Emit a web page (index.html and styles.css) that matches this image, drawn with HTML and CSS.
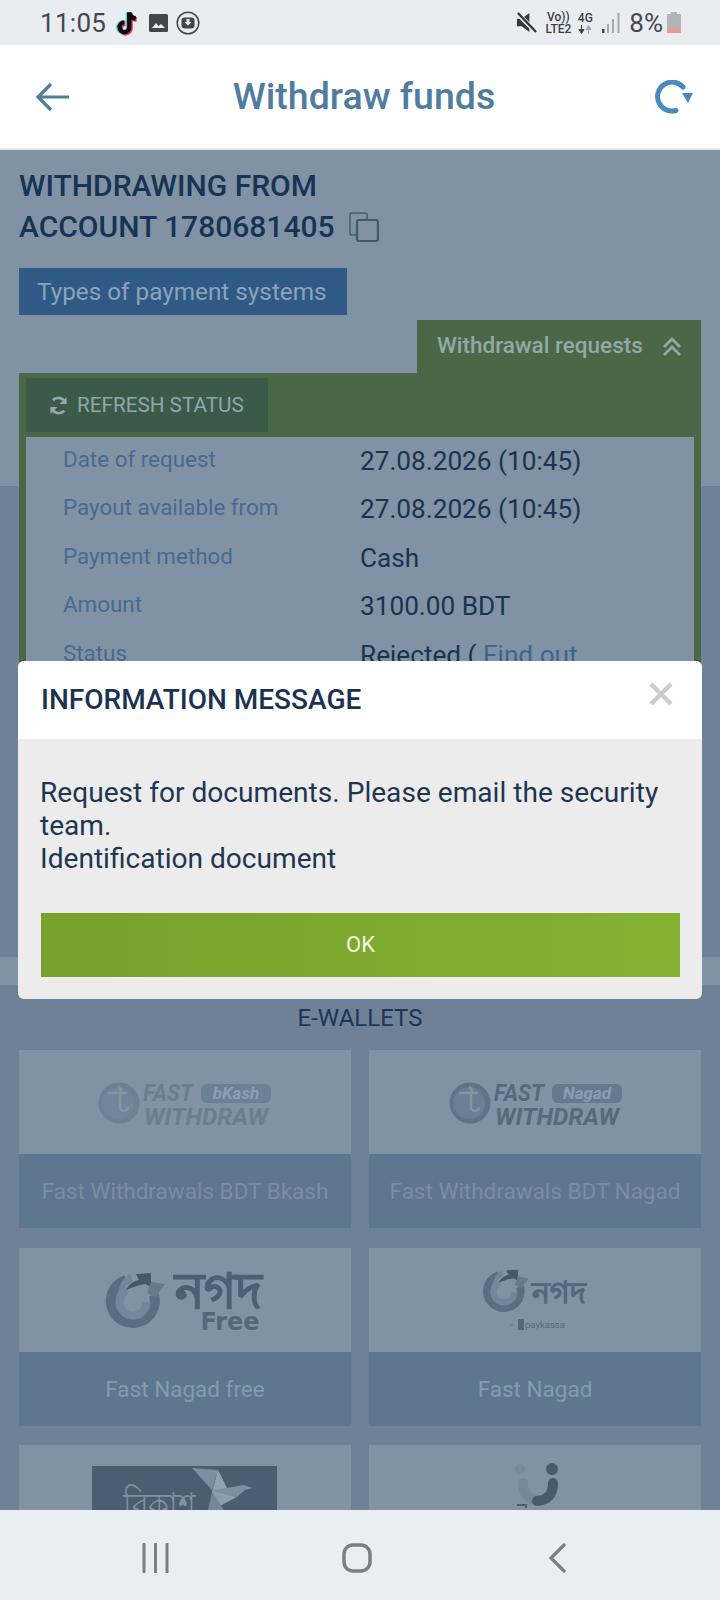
FILE: index.html
```html
<!DOCTYPE html>
<html lang="en">
<head>
<meta charset="utf-8">
<title>Withdraw funds</title>
<link rel="stylesheet" href="styles.css">
</head>
<body>
<div class="app">
  <div class="status">
    <div class="status-left">
      <span class="clock">11:05</span>
      <svg class="ic-tiktok" viewBox="0 0 24 26"><path d="M15 3v14a4.500 4.500 0 1 1-4.500-4.500" fill="none" stroke="#f0385f" stroke-width="4.500" transform="translate(1 1)"/><path d="M15 3c.5 3.500 3 5.500 6 5.700" fill="none" stroke="#f0385f" stroke-width="4.500" transform="translate(1 1)"/><path d="M15 3v14a4.500 4.500 0 1 1-4.500-4.500" fill="none" stroke="#4be0e6" stroke-width="4.500" transform="translate(-1 0)"/><path d="M15 3v14a4.500 4.500 0 1 1-4.500-4.500M15 3c.5 3.500 3 5.500 6 5.700" fill="none" stroke="#0c0c10" stroke-width="4.200"/></svg>
      <svg class="ic-image" viewBox="0 0 19 18"><rect width="19" height="18" rx="1.500" fill="#43474d"/><path d="M3 14l4-5 2.500 3 2.500-2 4 4z" fill="#e9edf2"/></svg>
      <svg class="ic-circle" viewBox="0 0 24 24"><circle cx="12" cy="12" r="10.800" fill="none" stroke="#44484e" stroke-width="1.500"/><rect x="5.500" y="6.500" width="13" height="11" rx="3" fill="#43474d"/><path d="M10.500 8h3v3h2l-3.500 3.500L8.500 11h2z" fill="#e9edf2"/></svg>
    </div>
    <div class="status-right">
      <svg class="ic-mute" viewBox="0 0 22 22"><path d="M1 7h5l8-6v20l-8-6H1z" fill="#33373c"/><path d="M1 1l20 20" stroke="#e9edf2" stroke-width="5"/><path d="M2 1l19 20" stroke="#33373c" stroke-width="2.500"/></svg>
      <span class="volte"><span>Vo))</span><span>LTE2</span></span>
      <span class="net"><span>4G</span><svg class="ic-updown" viewBox="0 0 14 9"><path d="M3.500 0v5M1 4.500l2.500 4 2.500-4z" fill="#3d4147" stroke="#3d4147"/><path d="M10.500 9V4M8 4.500l2.500-4 2.500 4z" fill="#a5a9ae" stroke="#a5a9ae"/></svg></span>
      <svg class="ic-signal" viewBox="0 0 18 20"><rect x="0" y="16" width="2.500" height="4" fill="#43474d"/><rect x="5" y="11" width="2" height="9" fill="#a4a8ad"/><rect x="10" y="6" width="2" height="14" fill="#a4a8ad"/><rect x="15.500" y="0" width="2" height="20" fill="#a4a8ad"/></svg>
      <span class="battery-text">8%</span>
      <svg class="ic-battery" viewBox="0 0 14 21"><rect x="4" y="0" width="6" height="2" fill="#b0b4ba"/><rect y="2" width="14" height="19" rx="1" fill="#b0b4ba"/><rect y="17" width="14" height="4" fill="#ee9a86"/></svg>
    </div>
  </div>

  <header class="topbar">
    <svg class="ic-back" viewBox="0 0 36 30"><path d="M34 15H3M16 2L3 15l13 13" fill="none" stroke="#4f7da0" stroke-width="3.200"/></svg>
    <h1 class="topbar-title">Withdraw funds</h1>
    <svg class="ic-reload" viewBox="0 0 38 34"><path d="M21 30.500A14.500 14.500 0 1 1 28 7" fill="none" stroke="#4a88bf" stroke-width="5" stroke-linecap="round"/><path d="M38 13l-5 10-6-10z" fill="#4a88bf"/></svg>
  </header>

  <main class="content">
    <h2 class="account-title">WITHDRAWING FROM<br>ACCOUNT 1780681405 <svg class="ic-copy" viewBox="0 0 30 30"><path d="M7 23H3a2 2 0 0 1-2-2V3a2 2 0 0 1 2-2h13a2 2 0 0 1 2 2v4" fill="none" stroke="#4f6a7c" stroke-width="2"/><rect x="8" y="8" width="21" height="21" rx="2" fill="none" stroke="#3e5a6b" stroke-width="2.200"/></svg></h2>

    <button class="types-btn">Types of payment systems</button>

    <div class="tab-row">
      <div class="tab">
        <span>Withdrawal requests</span>
        <svg class="ic-chevrons" viewBox="0 0 20 20"><path d="M2 10l8-8 8 8M2 18l8-8 8 8" fill="none" stroke="#93a8a8" stroke-width="2.800"/></svg>
      </div>
    </div>

    <section class="requests">
      <button class="refresh-btn">
        <svg class="ic-sync" viewBox="0 0 20 20"><path d="M17.500 8A8 8 0 0 0 4 4.500M2.500 12A8 8 0 0 0 16 15.500" fill="none" stroke="#93a6a9" stroke-width="3"/><path d="M18.500 1v7.500H11zM1.500 19v-7.500H9z" fill="#93a6a9"/></svg>
        REFRESH STATUS
      </button>
      <dl class="details">
        <div class="row"><dt>Date of request</dt><dd>27.08.2026 (10:45)</dd></div>
        <div class="row"><dt>Payout available from</dt><dd>27.08.2026 (10:45)</dd></div>
        <div class="row"><dt>Payment method</dt><dd>Cash</dd></div>
        <div class="row"><dt>Amount</dt><dd>3100.00 BDT</dd></div>
        <div class="row"><dt>Status</dt><dd>Rejected ( <a class="link">Find out</a></dd></div>
      </dl>
    </section>

    <h3 class="group-title">E-WALLETS</h3>

    <div class="cards">
      <article class="card">
        <div class="card-logo">
          <svg class="logo" viewBox="0 0 332 104">
            <circle cx="100" cy="53" r="20.500" fill="#6d8094"/><circle cx="99" cy="53" r="16" fill="#72859a"/>
            <path d="M89 43h19M99 37c5 2 2 5 2 10v9c0 7 8 6 8 1" fill="none" stroke="#84969f" stroke-width="2.500"/>
            <text class="fw-fast" x="124" y="51" textLength="50" lengthAdjust="spacingAndGlyphs">FAST</text>
            <rect x="182" y="34" width="70" height="19" rx="6" fill="#6c8095"/>
            <text class="fw-tag" x="217" y="49" text-anchor="middle">bKash</text>
            <text class="fw-draw" x="125" y="75" textLength="124" lengthAdjust="spacingAndGlyphs">WITHDRAW</text>
          </svg>
        </div>
        <div class="card-name">Fast Withdrawals BDT Bkash</div>
      </article>
      <article class="card">
        <div class="card-logo">
          <svg class="logo" viewBox="0 0 332 104">
            <circle cx="101" cy="53" r="20.500" fill="#5f7287"/><circle cx="100" cy="53" r="16" fill="#6b7e93"/>
            <path d="M90 43h19M100 37c5 2 2 5 2 10v9c0 7 8 6 8 1" fill="none" stroke="#84969f" stroke-width="2.500"/>
            <text class="fw-fast fw-dark" x="125" y="51" textLength="50" lengthAdjust="spacingAndGlyphs">FAST</text>
            <rect x="183" y="34" width="70" height="19" rx="6" fill="#66798e"/>
            <text class="fw-tag" x="218" y="49" text-anchor="middle">Nagad</text>
            <text class="fw-draw fw-dark" x="126" y="75" textLength="124" lengthAdjust="spacingAndGlyphs">WITHDRAW</text>
          </svg>
        </div>
        <div class="card-name">Fast Withdrawals BDT Nagad</div>
      </article>
      <article class="card">
        <div class="card-logo">
          <svg class="logo" viewBox="0 0 332 104">
            <g transform="translate(114 54)">
              <path d="M-7-22A22 22 0 1 0 21-7" fill="none" stroke="#5a6d82" stroke-width="10"/>
              <path d="M-6-12A13.500 13.500 0 1 0 13.500 0" fill="none" stroke="#74879a" stroke-width="8"/>
              <path d="M-15-8C-14-18-9-25-3-28L0-20C-6-18-10-13-15-8Z" fill="#74879a"/>
              <path d="M-7-12C-4-18 1-21 6-22L3-28 18-29V-15L12-18C6-17 0-15-7-12Z" fill="#46576b"/>
              <path d="M18-20L32-18 23-5 14-9Z" fill="#66798d"/>
            </g>
            <text class="nagad-big" x="199" y="60" text-anchor="middle">নগদ</text>
            <text class="nagad-free" x="211" y="82" text-anchor="middle">Free</text>
          </svg>
        </div>
        <div class="card-name card-name-lite">Fast Nagad free</div>
      </article>
      <article class="card">
        <div class="card-logo">
          <svg class="logo" viewBox="0 0 332 104">
            <g transform="translate(135 44) scale(.77)">
              <path d="M-7-22A22 22 0 1 0 21-7" fill="none" stroke="#5a6d82" stroke-width="10"/>
              <path d="M-6-12A13.500 13.500 0 1 0 13.500 0" fill="none" stroke="#74879a" stroke-width="8"/>
              <path d="M-15-8C-14-18-9-25-3-28L0-20C-6-18-10-13-15-8Z" fill="#74879a"/>
              <path d="M-7-12C-4-18 1-21 6-22L3-28 18-29V-15L12-18C6-17 0-15-7-12Z" fill="#46576b"/>
              <path d="M18-20L32-18 23-5 14-9Z" fill="#66798d"/>
            </g>
            <text class="nagad-small" x="190" y="55" text-anchor="middle">নগদ</text>
            <path d="M141 77h3" stroke="#65788c" stroke-width="1"/>
            <rect x="149" y="71" width="6" height="11" fill="#53667a"/>
            <text class="paykassa" x="156" y="80">paykassa</text>
          </svg>
        </div>
        <div class="card-name card-name-lite">Fast Nagad</div>
      </article>
      <article class="card">
        <div class="card-logo">
          <svg class="logo" viewBox="0 0 332 104">
            <rect x="73" y="21" width="185" height="83" fill="#4b5d70"/>
            <text class="bkash-bn" x="104" y="74" textLength="72" lengthAdjust="spacingAndGlyphs">বিকাশ</text>
            <path d="M173 23l26 2-6 20z" fill="#7d8fa2"/>
            <path d="M199 25l9 18-15 4z" fill="#91a2b3"/>
            <path d="M193 45l25 7-25 13z" fill="#8b9cae"/>
            <path d="M208 43l16-3 10 3-8 2-8 7-25-7z" fill="#7d8fa2"/>
            <path d="M189 65l4-18 12 18z" fill="#74869a"/>
          </svg>
        </div>
      </article>
      <article class="card">
        <div class="card-logo">
          <svg class="logo" viewBox="0 0 332 104">
            <circle cx="151" cy="24" r="5" fill="#788a9d"/><circle cx="183" cy="24" r="6" fill="#495a6d"/>
            <path d="M154 38c0 11 6 17 16 17" fill="none" stroke="#75879b" stroke-width="10" stroke-linecap="round"/>
            <path d="M184 38c0 11-5 17-16 18" fill="none" stroke="#485a6e" stroke-width="10" stroke-linecap="round"/>
            <path d="M148 60h9v3" fill="none" stroke="#4c5d70" stroke-width="2"/>
          </svg>
        </div>
      </article>
    </div>
  </main>

  <nav class="navbar">
    <svg class="ic-recents" viewBox="0 0 27 30"><path d="M2 1v28M13.500 1v28M25 1v28" fill="none" stroke="#7b7f85" stroke-width="3" stroke-linecap="round"/></svg>
    <svg class="ic-home" viewBox="0 0 30 30"><rect x="2" y="2" width="26" height="26" rx="9" fill="none" stroke="#7b7f85" stroke-width="3.500"/></svg>
    <svg class="ic-navback" viewBox="0 0 18 30"><path d="M16 2L3 15l13 13" fill="none" stroke="#7b7f85" stroke-width="3.200" stroke-linecap="round"/></svg>
  </nav>

  <div class="modal">
    <div class="modal-head">
      <h2 class="modal-title">INFORMATION MESSAGE</h2>
      <svg class="ic-close" viewBox="0 0 24 24"><path d="M2 2l20 20M22 2L2 22" stroke="#cccccc" stroke-width="4.500"/></svg>
    </div>
    <div class="modal-body">
      <p class="modal-text">Request for documents. Please email the security team.<br>Identification document</p>
      <button class="ok-btn">OK</button>
    </div>
  </div>
</div>
</body>
</html>
```

FILE: styles.css
```css
* { box-sizing: border-box; }
html, body { margin: 0; padding: 0; }
body { font-family: Roboto, "Noto Sans", sans-serif; }

.app {
  position: relative;
  width: 720px;
  height: 1600px;
  display: flex;
  flex-direction: column;
  overflow: hidden;
}

/* status bar */
.status {
  height: 45px;
  flex: none;
  background: #e9edf2;
  display: flex;
  justify-content: space-between;
  align-items: center;
  padding: 0 39px 0 40px;
  color: #43474d;
}
.status-left, .status-right { display: flex; align-items: center; }
.clock { font-size: 26px; letter-spacing: .3px; font-weight: 400; }
.ic-tiktok { width: 26px; height: 28px; margin-left: 7px; }
.ic-image { width: 19px; height: 18px; margin-left: 10px; }
.ic-circle { width: 24px; height: 24px; margin-left: 8px; }
.ic-mute { width: 21px; height: 21px; }
.volte {
  display: flex; flex-direction: column; align-items: center;
  font-size: 12px; line-height: 12px; font-weight: 500; margin-left: 7px; width: 28px; color: #3d4147;
}
.net {
  display: flex; flex-direction: column; align-items: center;
  font-size: 12px; line-height: 12px; font-weight: 500; margin-left: 6px; width: 14px; color: #3d4147;
}
.ic-updown { width: 14px; height: 9px; margin-top: 1px; }
.ic-signal { width: 18px; height: 20px; margin-left: 10px; }
.battery-text { font-size: 26px; margin-left: 9px; }
.ic-battery { width: 14px; height: 21px; margin-left: 4px; }

/* header */
.topbar {
  height: 105px;
  flex: none;
  background: #fff;
  border-bottom: 2px solid #e3e6ea;
  display: flex;
  align-items: center;
  justify-content: space-between;
  padding: 1px 27px 0 35px;
}
.ic-back { width: 36px; height: 30px; }
.topbar-title { margin: 0 0 0 2px; font-size: 37.500px; font-weight: 500; color: #4f7c9f; line-height: 1; }
.ic-reload { width: 38px; height: 34px; }

/* page */
.content {
  flex: 1;
  min-height: 0;
  overflow: hidden;
  padding: 15px 19px 0;
  background: linear-gradient(#8192a4 0 336px, #6e8197 336px 807px, #8192a4 807px 835px, #6e8197 835px);
}
.account-title {
  margin: 0;
  font-size: 30px;
  line-height: 41px;
  font-weight: 500;
  color: #173454;
}
.ic-copy { width: 30px; height: 30px; vertical-align: -5px; margin-left: 7px; }
.types-btn {
  display: block;
  margin-top: 21px;
  width: 328px;
  height: 47px;
  border: 0;
  padding: 0 0 0 18px;
  text-align: left;
  background: #2f5a85;
  color: #8ba3ba;
  font: 400 24.300px Roboto, sans-serif;
}
.tab-row { display: flex; justify-content: flex-end; margin-top: 5px; }
.tab {
  width: 284px;
  height: 53px;
  background: #4b6846;
  color: #93a8a8;
  font-size: 22.500px;
  font-weight: 500;
  display: flex;
  align-items: center;
  justify-content: space-between;
  padding: 0 19px 3px 20px;
}
.ic-chevrons { width: 20px; height: 20px; margin-top: 4px; }
.requests {
  height: 584px;
  background: #4b6846;
  padding: 5px 7px 0;
  overflow: hidden;
}
.refresh-btn {
  display: flex;
  align-items: center;
  gap: 9px;
  width: 242px;
  height: 54px;
  border: 0;
  padding: 0 0 0 23px;
  background: #3b5a4a;
  color: #93a6a9;
  font: 400 20.700px Roboto, sans-serif;
}
.ic-sync { width: 19px; height: 19px; }
.details { margin: 5px 0 0; height: 520px; padding: 0 0 0 37px; background: #8192a4; }
.row { display: grid; grid-template-columns: 297px 1fr; height: 48.500px; align-items: center; }
.row dt { color: #486a8f; font-size: 22.400px; margin-top: -5px; }
.row dd { margin: 0; color: #1b3350; font-size: 26.200px; margin-top: -1px; }
.link { color: #3a6690; }

.group-title {
  margin: 45px 0 0;
  height: 33px;
  line-height: 33px;
  text-align: center;
  font-size: 24px;
  font-weight: 400;
  color: #1d3653;
}
.cards {
  display: grid;
  grid-template-columns: 332px 332px;
  column-gap: 18px;
  row-gap: 19.500px;
  margin-top: 15px;
}
.card-logo { height: 104px; background: #8192a4; }
.logo { display: block; width: 332px; height: 104px; }
.card-name {
  height: 74px;
  background: #5f7690;
  color: #7a8da2;
  font-size: 22.500px;
  text-align: center;
  line-height: 74px;
}
.card-name-lite { color: #879aac; }

.fw-fast, .fw-draw { font-family: Roboto, sans-serif; font-style: italic; font-weight: 700; fill: #6b7d90; }
.fw-fast { font-size: 24px; }
.fw-draw { font-size: 24px; }
.fw-dark { fill: #56697e; }
.fw-tag { font: italic 700 17px Roboto, sans-serif; fill: #8c9eb0; }
.nagad-big { font: 700 49px "Noto Sans", sans-serif; fill: #4d5f74; stroke: #4d5f74; stroke-width: .8px; }
.nagad-small { font: 700 30px "Noto Sans", sans-serif; fill: #55677c; stroke: #55677c; stroke-width: .4px; }
.nagad-free { font: 700 24px "DejaVu Sans", sans-serif; fill: #55677b; }
.paykassa { font: 400 9.500px Roboto, sans-serif; fill: #56687b; }
.bkash-bn { font: 400 38px "Noto Sans", sans-serif; fill: #7f90a2; }

/* navigation */
.navbar {
  height: 90px;
  flex: none;
  background: #eaeef3;
  display: flex;
  align-items: center;
  padding: 5px 154px 0 142px;
  justify-content: space-between;
}
.ic-recents { width: 27px; height: 30px; }
.ic-home { width: 30px; height: 30px; margin-left: -4px; }
.ic-navback { width: 18px; height: 30px; }

/* dialog */
.modal {
  position: absolute;
  left: 18px;
  top: 661px;
  width: 684px;
  height: 338px;
  border-radius: 6px;
  overflow: hidden;
  background: #ececec;
}
.modal-head {
  height: 78px;
  background: #fff;
  display: flex;
  justify-content: space-between;
  padding: 0 29px 0 23px;
}
.modal-title { margin: 0; padding-top: 21px; font-size: 28px; line-height: 36px; font-weight: 500; color: #1b3350; }
.ic-close { width: 24px; height: 24px; margin-top: 21px; }
.modal-body { padding: 37px 22px 0 23px; }
.modal-text { margin: 0 0 0 -1px; font-size: 28.100px; line-height: 33px; color: #1f3650; height: 99px; }
.ok-btn {
  display: block;
  width: 639px;
  height: 64px;
  margin-top: 38px;
  border: 0;
  padding: 0 0 2px;
  background: linear-gradient(90deg, #77a02c, #84b230);
  color: #f2f8e6;
  font: 400 22px Roboto, sans-serif;
}
```
